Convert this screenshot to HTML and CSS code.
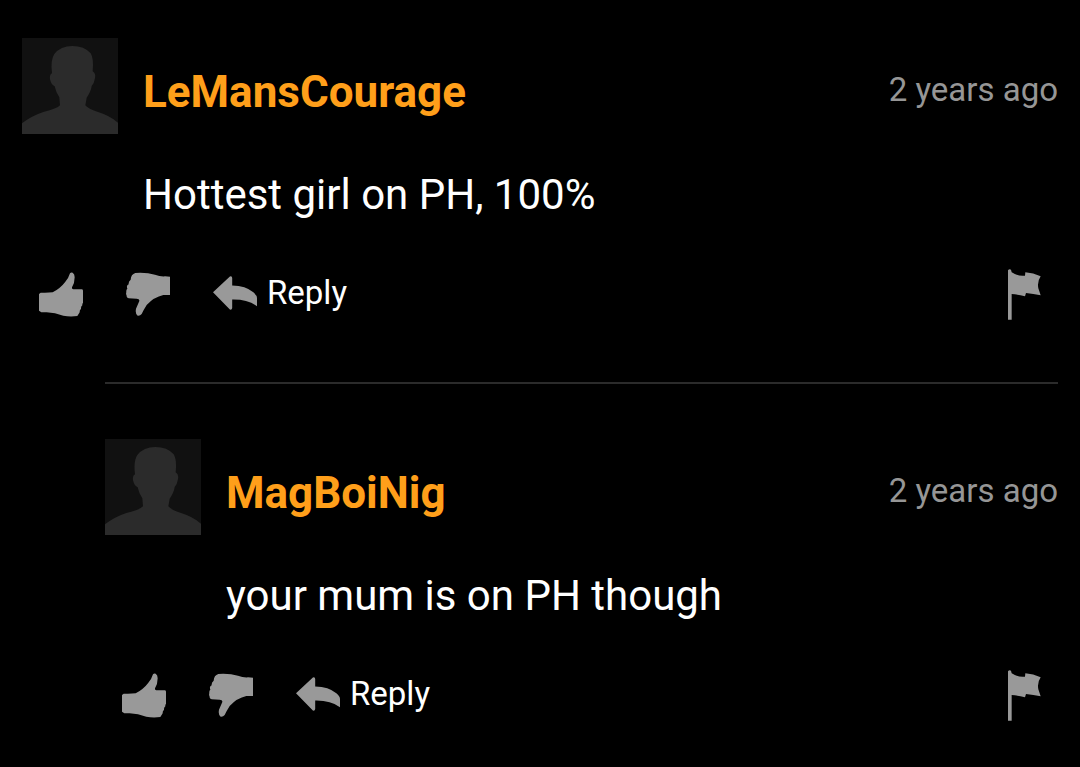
FILE: index.html
```html
<!DOCTYPE html>
<html lang="en">
<head>
    <meta charset="UTF-8">
    <meta name="viewport" content="width=device-width, initial-scale=1">
    <title>Comments</title>
    <link rel="stylesheet" href="styles.css">
</head>
<body>
    <!-- Shared icons -->
    <svg class="sprite" aria-hidden="true">
        <symbol id="avatar" viewBox="0 0 288 288">
            <path d="M0 288V256Q28 234 64 222Q106 212 114 202L112 178Q102 164 98 145Q88 141 84 124Q82 110 90 106Q85 66 97 48Q116 24 151 24Q187 24 206 46Q216 62 212 100Q222 106 219 120Q217 135 209 144Q207 160 194 179L190 202Q196 211 228 222Q264 233 288 254V288Z"/>
        </symbol>
        <symbol id="thumb-up" viewBox="27 36 132 135">
            <path d="M27 102L32 98Q52 99 68 97Q92 84 106 65Q116 54 120 40Q123 36 128 38Q134 41 134 52Q134 70 126 82Q124 88 134 88L156 88Q159 89 159 92L159 128Q156 132 157 136Q152 140 153 146Q148 151 149 157Q145 164 142 168Q120 171 100 167Q75 158 50 157L34 157L27 152Z"/>
        </symbol>
        <symbol id="thumb-down" viewBox="288 35 132 135">
            <path d="M420 49L420 104L400 104Q372 110 350 134Q340 150 335 161Q330 167 323 166Q315 161 318 145L328 122Q329 115 320 115L296 114Q289 112 290 106Q287 100 289 96Q288 88 292 85Q288 76 296 72Q295 63 302 58Q303 42 316 38Q350 36 375 43Q390 49 405 48Z"/>
        </symbol>
        <symbol id="reply" viewBox="26 46 133 102">
            <path d="M26 95L77 47Q84 45 84 52L84 74Q125 74 148 95Q159 104 159 112L159 137Q130 116 84 117L84 142Q83 149 77 147Z"/>
        </symbol>
        <symbol id="flag" viewBox="54 42 99 153">
            <path d="M54 46Q58 40 63 44L65 52Q85 65 105 62L106 52Q130 53 152 64Q141 80 145 100L152 121Q130 116 108 114L105 124Q85 118 65 117L65 194L54 194Z"/>
        </symbol>
    </svg>

    <main class="comments">
        <article class="comment">
            <header class="comment_header">
                <svg class="avatar" aria-hidden="true"><use href="#avatar"/></svg>
                <a class="username" href="#">LeMansCourage</a>
                <time class="date">2 years ago</time>
            </header>
            <p class="message">Hottest girl on PH, 100%</p>
            <div class="actions">
                <button type="button" aria-label="Like"><svg class="thumb"><use href="#thumb-up"/></svg></button>
                <button type="button" aria-label="Dislike"><svg class="thumb"><use href="#thumb-down"/></svg></button>
                <button type="button" class="reply"><svg class="arrow" aria-hidden="true"><use href="#reply"/></svg>Reply</button>
                <button type="button" class="report" aria-label="Report"><svg class="flag"><use href="#flag"/></svg></button>
            </div>
        </article>

        <article class="comment nested">
            <header class="comment_header">
                <svg class="avatar" aria-hidden="true"><use href="#avatar"/></svg>
                <a class="username" href="#">MagBoiNig</a>
                <time class="date">2 years ago</time>
            </header>
            <p class="message">your mum is on PH though</p>
            <div class="actions">
                <button type="button" aria-label="Like"><svg class="thumb"><use href="#thumb-up"/></svg></button>
                <button type="button" aria-label="Dislike"><svg class="thumb"><use href="#thumb-down"/></svg></button>
                <button type="button" class="reply"><svg class="arrow" aria-hidden="true"><use href="#reply"/></svg>Reply</button>
                <button type="button" class="report" aria-label="Report"><svg class="flag"><use href="#flag"/></svg></button>
            </div>
        </article>
    </main>
</body>
</html>
```

FILE: styles.css
```css
body {
    margin: 0;
    background-color: #000;
    color: #fff;
    font-family: Roboto, Arial, sans-serif;
}

.sprite {
    display: none;
}

.comments {
    padding: 38px 22px 0;
}

.nested {
    margin-top: 62px;
    margin-left: 83px;
    padding-top: 55px;
    border-top: 2px solid #2b2b2b;
}

.comment_header {
    display: flex;
    align-items: center;
}

.avatar {
    width: 96px;
    height: 96px;
    flex-shrink: 0;
    background-color: #111;
    fill: #2b2b2b;
}

.username {
    margin-top: 12px;
    margin-left: 25px;
    font-size: 44px;
    font-weight: bold;
    line-height: 52px;
    color: #ff9f1a;
    text-decoration: none;
}

.date {
    margin-top: 8px;
    margin-left: auto;
    font-size: 33px;
    line-height: 40px;
    color: #969696;
}

.message {
    margin: 36px 0 49px 121px;
    font-size: 42px;
    line-height: 50px;
}

.actions {
    display: flex;
    align-items: center;
    gap: 43px;
    padding: 0 17px;
}

.actions button {
    display: flex;
    align-items: center;
    gap: 10px;
    padding: 0;
    border: none;
    background: none;
    color: #fff;
    font-family: inherit;
    font-size: 33px;
    line-height: 40px;
    cursor: pointer;
}

.actions svg {
    fill: #999;
}

.thumb {
    width: 44px;
    height: 45px;
}

.arrow {
    width: 44px;
    height: 34px;
}

.flag {
    width: 33px;
    height: 51px;
}

.actions .reply {
    padding-bottom: 4px;
}

.actions .report {
    margin-left: auto;
}
```
